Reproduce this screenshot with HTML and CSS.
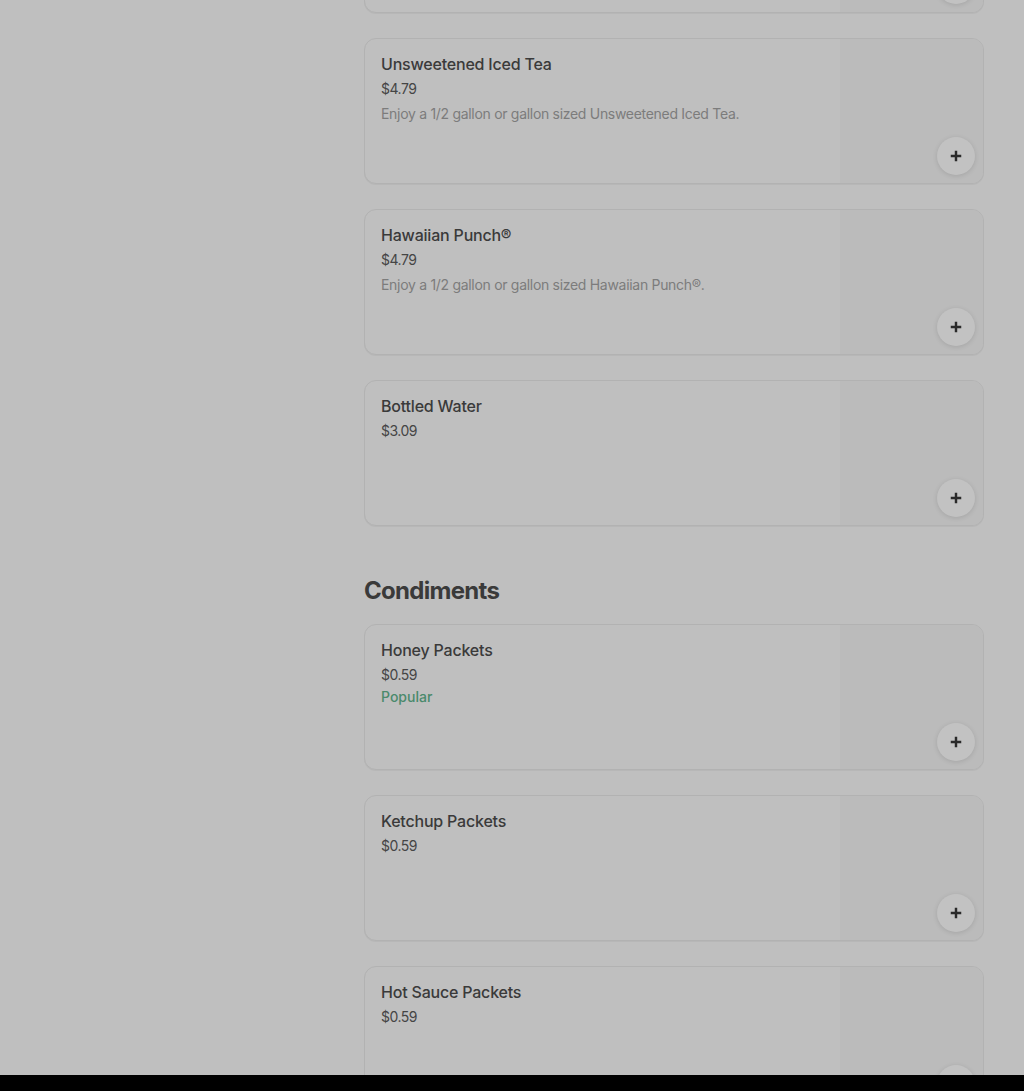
FILE: index.html
```html
<!DOCTYPE html>
<html lang="en">
<head>
<meta charset="utf-8">
<title>Menu</title>
<link rel="stylesheet" href="styles.css">
</head>
<body>
<div class="viewport">
  <main class="menu">
    <section class="group">
      <article class="card card-cut">
        <div class="info"></div>
        <div class="media"></div>
        <button class="add" aria-label="Add"><svg viewBox="0 0 16 16" width="14" height="14"><path d="M8 2v12M2 8h12" stroke="#2a2a2a" stroke-width="2.8"/></svg></button>
      </article>
      <article class="card">
        <div class="info">
          <h3 class="title">Unsweetened Iced Tea</h3>
          <div class="price">$4.79</div>
          <p class="desc">Enjoy a 1/2 gallon or gallon sized Unsweetened Iced Tea.</p>
        </div>
        <div class="media"></div>
        <button class="add" aria-label="Add"><svg viewBox="0 0 16 16" width="14" height="14"><path d="M8 2v12M2 8h12" stroke="#2a2a2a" stroke-width="2.8"/></svg></button>
      </article>
      <article class="card">
        <div class="info">
          <h3 class="title">Hawaiian Punch®</h3>
          <div class="price">$4.79</div>
          <p class="desc">Enjoy a 1/2 gallon or gallon sized Hawaiian Punch®.</p>
        </div>
        <div class="media"></div>
        <button class="add" aria-label="Add"><svg viewBox="0 0 16 16" width="14" height="14"><path d="M8 2v12M2 8h12" stroke="#2a2a2a" stroke-width="2.8"/></svg></button>
      </article>
      <article class="card">
        <div class="info">
          <h3 class="title">Bottled Water</h3>
          <div class="price">$3.09</div>
        </div>
        <div class="media"></div>
        <button class="add" aria-label="Add"><svg viewBox="0 0 16 16" width="14" height="14"><path d="M8 2v12M2 8h12" stroke="#2a2a2a" stroke-width="2.8"/></svg></button>
      </article>
    </section>
    <h2 class="heading">Condiments</h2>
    <section class="group">
      <article class="card">
        <div class="info">
          <h3 class="title">Honey Packets</h3>
          <div class="price">$0.59</div>
          <div class="tag">Popular</div>
        </div>
        <div class="media"></div>
        <button class="add" aria-label="Add"><svg viewBox="0 0 16 16" width="14" height="14"><path d="M8 2v12M2 8h12" stroke="#2a2a2a" stroke-width="2.8"/></svg></button>
      </article>
      <article class="card">
        <div class="info">
          <h3 class="title">Ketchup Packets</h3>
          <div class="price">$0.59</div>
        </div>
        <div class="media"></div>
        <button class="add" aria-label="Add"><svg viewBox="0 0 16 16" width="14" height="14"><path d="M8 2v12M2 8h12" stroke="#2a2a2a" stroke-width="2.8"/></svg></button>
      </article>
      <article class="card">
        <div class="info">
          <h3 class="title">Hot Sauce Packets</h3>
          <div class="price">$0.59</div>
        </div>
        <div class="media"></div>
        <button class="add" aria-label="Add"><svg viewBox="0 0 16 16" width="14" height="14"><path d="M8 2v12M2 8h12" stroke="#2a2a2a" stroke-width="2.8"/></svg></button>
      </article>
    </section>
  </main>
</div>
<div class="bar"></div>
</body>
</html>
```
FILE: styles.css
```css
* { box-sizing: border-box; }
html, body { margin: 0; padding: 0; }
body {
  background: #000;
  font-family: Inter, "Noto Sans", Roboto, sans-serif;
}
.viewport {
  height: 1075px;
  overflow: hidden;
  background: #bfbfbf;
}
.menu {
  margin-left: 364px;
  width: 620px;
  display: flex;
  flex-direction: column;
}
.group {
  display: flex;
  flex-direction: column;
  gap: 25px;
}
.card {
  position: relative;
  display: flex;
  height: 146px;
  border: 1px solid #b2b2b2;
  border-radius: 12px;
  background: #bfbfbf;
  overflow: hidden;
  box-shadow: 0 1px 0 #b7b7b7;
}
.card-cut { margin-top: -133px; }
.info {
  flex: 1;
  padding: 14px 16px;
}
.media {
  width: 143px;
  background: #bbbbbb;
}
.title {
  margin: 0;
  font-size: 16px;
  line-height: 22px;
  font-weight: 500;
  color: #3a3a3a;
  letter-spacing: -0.2px;
}
.price {
  margin-top: 4px;
  font-size: 14px;
  line-height: 20px;
  color: #454545;
  letter-spacing: -0.5px;
}
.desc {
  margin: 5px 0 0;
  font-size: 14px;
  line-height: 20px;
  color: #7c7c7c;
  letter-spacing: -0.3px;
}
.tag {
  margin-top: 2px;
  font-size: 14px;
  line-height: 20px;
  font-weight: 500;
  color: #4a8a6c;
}
.add {
  position: absolute;
  right: 8px;
  bottom: 8px;
  width: 38px;
  height: 38px;
  border: none;
  border-radius: 50%;
  background: #c2c2c2;
  box-shadow: 0 1px 5px rgba(0,0,0,0.12);
  display: flex;
  align-items: center;
  justify-content: center;
  padding: 0;
}
.heading {
  margin: 49px 0 17px;
  font-size: 24px;
  line-height: 32px;
  font-weight: 700;
  color: #3a3a3a;
  letter-spacing: -0.7px;
}
.bar { height: 16px; background: #000; }
```
